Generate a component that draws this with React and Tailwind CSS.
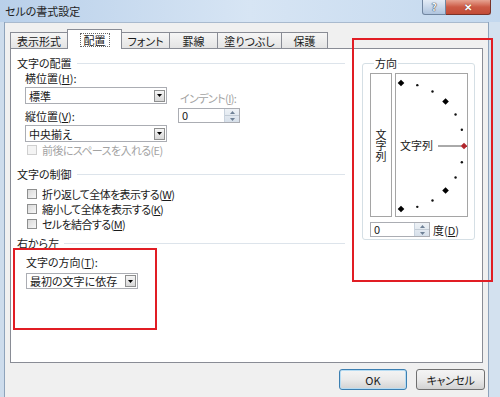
import React from "react";

const Caret = ({ color = "#000" }) => (
  <svg width="5" height="3" viewBox="0 0 5 3">
    <path d="M0 0h5L2.5 3z" fill={color} />
  </svg>
);

function Select({ w, h, text }) {
  return (
    <div className={`flex items-center border border-[#abadb3] bg-white pl-[3px] ${w} ${h}`}>
      <span className="text-[11px] leading-[14px]">{text}</span>
      <div className="ml-auto mr-px flex h-[12px] w-[11px] items-center justify-center border border-[#8e8f8f] bg-linear-to-b from-[#f6f6f6] to-[#d8d8d8]">
        <Caret />
      </div>
    </div>
  );
}

function Spinner() {
  return (
    <div className="ml-auto flex h-full w-[15px] flex-col border-l border-[#c9d3de] bg-linear-to-b from-[#eef2f6] to-[#d7e0ea]">
      <div className="flex flex-1 items-center justify-center border-b border-[#c3ccd6]">
        <svg width="5" height="3" viewBox="0 0 5 3">
          <path d="M0 3h5L2.5 0z" fill="#6f8196" />
        </svg>
      </div>
      <div className="flex flex-1 items-center justify-center">
        <Caret color="#6f8196" />
      </div>
    </div>
  );
}

function Header({ t }) {
  return (
    <div className="flex h-[14px] items-center">
      <span className="text-[11px] leading-[14px]">{t}</span>
      <div className="ml-[5px] h-px flex-1 bg-[#dde4eb]" />
    </div>
  );
}

function CheckRow({ children, disabled }) {
  return (
    <div className="flex h-[15px] items-center pl-[10px]">
      <div
        className={
          disabled
            ? "h-[10px] w-[10px] border border-[#cfcfcf] bg-[#f4f4f4]"
            : "h-[10px] w-[10px] border border-[#8e8f8f] bg-linear-to-br from-[#d9d9d9] to-[#f7f7f7]"
        }
      />
      <span
        className={
          disabled
            ? "ml-[5px] text-[11px] leading-[14px] tracking-[-0.6px] text-[#a3a3a3]"
            : "ml-[5px] text-[11px] leading-[14px] tracking-[-0.6px]"
        }
      >
        {children}
      </span>
    </div>
  );
}

function Tab({ children, selected, w, first }) {
  if (selected) {
    return (
      <div
        className={`-ml-px flex h-[20px] items-start justify-center border border-b-0 border-[#898c95] bg-white pt-[3px] ${w}`}
      >
        <span className="border border-dotted border-[#666] px-[3px] text-[11px] leading-[12px]">
          {children}
        </span>
      </div>
    );
  }
  return (
    <div
      className={`mb-px flex h-[16px] items-center justify-center border border-b-0 border-[#898c95] bg-linear-to-b from-[#f6f6f6] to-[#e4e4e4] text-[11px] leading-[14px] ${
        first ? "" : "-ml-px"
      } ${w}`}
    >
      {children}
    </div>
  );
}

function Arc() {
  const cx = 5;
  const cy = 72;
  const r = 63;
  const pts = [];
  for (let a = 90; a >= -90; a -= 15) {
    const rad = (a * Math.PI) / 180;
    pts.push({ a, x: cx + r * Math.cos(rad), y: cy - r * Math.sin(rad) });
  }
  return (
    <svg className="absolute inset-0" width="71" height="142" viewBox="0 0 71 142">
      <line x1="42" y1="72" x2="65" y2="72" stroke="#555" strokeWidth="1" />
      {pts.map((p) => {
        const big = p.a % 45 === 0;
        if (big) {
          const s = 3.3;
          return (
            <polygon
              key={p.a}
              points={`${p.x},${p.y - s} ${p.x + s},${p.y} ${p.x},${p.y + s} ${p.x - s},${p.y}`}
              fill={p.a === 0 ? "#b0262c" : "#000"}
            />
          );
        }
        return <circle key={p.a} cx={p.x} cy={p.y} r="1.2" fill="#111" />;
      })}
    </svg>
  );
}

export default function App() {
  return (
    <div className="relative h-[397px] w-[500px] overflow-hidden bg-[#c6d8ec] font-['Noto_Sans_CJK_JP',sans-serif] text-[#1a1a1a] [font-feature-settings:'palt']">
      {/* title bar */}
      <div className="flex h-[22px] bg-linear-to-r from-[#b9d0ea] via-[#d7e5f4] to-[#c3d8ee]">
        <div className="pl-[5px] pt-[4px] text-[11px] leading-[15px] text-[#1e1e1e]">セルの書式設定</div>
        <div className="ml-auto mr-[9px] flex h-[15px]">
          <div className="flex w-[24px] items-center justify-center rounded-bl-[3px] border border-t-0 border-[#7186a0] bg-linear-to-b from-[#e4ecf6] to-[#afc4de] text-[10px] font-bold leading-none text-[#f4f7fb] [text-shadow:0_0_1px_#223,0_0_1px_#223]">
            ?
          </div>
          <div className="flex w-[45px] items-center justify-center rounded-br-[3px] border border-l-0 border-t-0 border-[#7a3328] bg-linear-to-b from-[#e6a392] via-[#cc5a45] to-[#c24b36] text-[10px] font-bold leading-none text-white [text-shadow:0_0_1px_#5a1a10]">
            ✕
          </div>
        </div>
      </div>

      <div className="flex h-[375px]">
        <div className="w-[5px] border-r border-[#8ea3bb] bg-[#cddcec]" />
        <div className="flex w-[483px] flex-col border-t border-[#a9bace] bg-[#f0f0f0]">
          {/* tabs */}
          <div className="relative z-10 mt-[6px] flex h-[20px] items-end pl-[5px]">
            <Tab first w="w-[58px]">表示形式</Tab>
            <Tab selected w="w-[55px]">配置</Tab>
            <Tab w="w-[49px]">フォント</Tab>
            <Tab w="w-[49px]">罫線</Tab>
            <Tab w="w-[65px]">塗りつぶし</Tab>
            <Tab w="w-[47px]">保護</Tab>
          </div>

          {/* panel */}
          <div className="relative z-0 -mt-px ml-[5px] flex h-[315px] w-[473px] border border-[#898c95] bg-white">
            {/* left column */}
            <div className="ml-[6px] flex w-[328px] flex-col">
              <div className="mt-[7px]">
                <Header t="文字の配置" />
              </div>
              <div className="flex pl-[8px]">
                <div className="flex w-[142px] flex-col">
                  <div className="mt-px h-[14px] text-[11px] leading-[14px]">
                    横位置(<span className="underline">H</span>):
                  </div>
                  <div className="mt-[2px]">
                    <Select w="w-[142px]" h="h-[17px]" text="標準" />
                  </div>
                  <div className="mt-[5px] h-[14px] text-[11px] leading-[14px]">
                    縦位置(<span className="underline">V</span>):
                  </div>
                  <div className="mt-[2px]">
                    <Select w="w-[142px]" h="h-[17px]" text="中央揃え" />
                  </div>
                </div>
                <div className="ml-[11px] flex flex-col">
                  <div className="mt-[21px] h-[14px] pl-[2px] text-[11px] leading-[14px] tracking-[-0.6px] text-[#a3a3a3]">
                    インデント(<span className="underline">I</span>):
                  </div>
                  <div className="mt-[3px] flex h-[15px] w-[62px] items-center border border-[#abadb3] bg-white pl-[3px]">
                    <span className="text-[11px] leading-[13px]">0</span>
                    <Spinner />
                  </div>
                </div>
              </div>
              <CheckRow disabled>前後にスペースを入れる(E)</CheckRow>

              <div className="mt-[10px]">
                <Header t="文字の制御" />
              </div>
              <div className="mt-[5px]">
                <CheckRow>
                  折り返して全体を表示する(<span className="underline">W</span>)
                </CheckRow>
                <CheckRow>
                  縮小して全体を表示する(<span className="underline">K</span>)
                </CheckRow>
                <CheckRow>
                  セルを結合する(<span className="underline">M</span>)
                </CheckRow>
              </div>

              <div className="mt-[5px]">
                <Header t="右から左" />
              </div>
              <div className="mt-[5px] h-[14px] pl-[9px] text-[11px] leading-[14px]">
                文字の方向(<span className="underline">T</span>):
              </div>
              <div className="mt-[4px] pl-[9px]">
                <Select w="w-[112px]" h="h-[16px]" text="最初の文字に依存" />
              </div>
            </div>

            {/* orientation group */}
            <fieldset className="ml-[17px] mt-[7px] h-fit w-[113px] rounded-[3px] border border-[#d5dfe5] pb-[2px] pl-[7px] pr-[6px]">
              <legend className="ml-[4px] px-px text-[11px] leading-[14px]">方向</legend>
              <div className="mt-[3px] flex gap-[3px]">
                <div className="flex h-[144px] w-[22px] items-center justify-center border border-[#a5a5a5] bg-white">
                  <span className="text-[11px] leading-[14px] [writing-mode:vertical-rl]">文字列</span>
                </div>
                <div className="relative flex h-[144px] w-[73px] items-center border border-[#a5a5a5] bg-white pl-[4px]">
                  <Arc />
                  <span className="relative text-[11px] leading-[14px]">文字列</span>
                </div>
              </div>
              <div className="mt-[5px] flex h-[15px] items-center">
                <div className="flex h-[15px] w-[60px] items-center border border-[#abadb3] bg-white pl-[3px]">
                  <span className="text-[11px] leading-[13px]">0</span>
                  <Spinner />
                </div>
                <span className="ml-[3px] text-[11px] leading-[14px]">
                  度(<span className="underline">D</span>)
                </span>
              </div>
            </fieldset>
          </div>

          {/* buttons */}
          <div className="mt-[6px] flex justify-end gap-[9px] pr-[3px]">
            <div className="flex h-[21px] w-[68px] items-center justify-center rounded-[3px] border border-[#3c7fb1] bg-linear-to-b from-[#f4f4f4] via-[#eaeaea] to-[#d2d2d2] text-[11px] leading-[14px] shadow-[inset_0_0_0_1px_#b6dcf3]">
              OK
            </div>
            <div className="flex h-[21px] w-[69px] items-center justify-center rounded-[3px] border border-[#707070] bg-linear-to-b from-[#f4f4f4] via-[#eaeaea] to-[#d2d2d2] text-[11px] leading-[14px] tracking-[-0.4px]">
              キャンセル
            </div>
          </div>
        </div>
        <div className="w-[12px] border-l border-[#8ea3bb] bg-[#d3e1ef]" />
      </div>

      {/* annotation boxes */}
      <div className="absolute left-[13px] top-[248px] h-[82px] w-[144px] border-2 border-[#e11d24]" />
      <div className="absolute left-[352px] top-[38px] h-[244px] w-[141px] border-2 border-[#e11d24]" />
    </div>
  );
}
